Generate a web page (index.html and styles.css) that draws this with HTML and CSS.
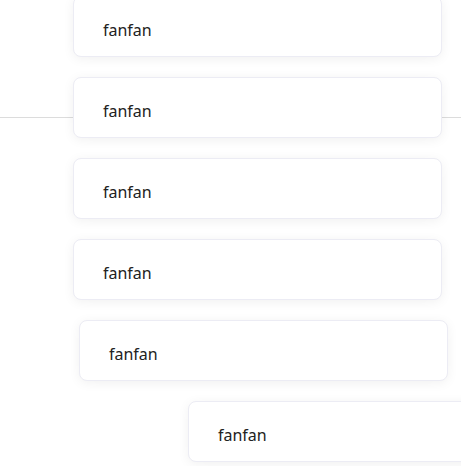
FILE: index.html
```html
<!DOCTYPE html>
<html>
<head>
<meta charset="utf-8">
<link rel="stylesheet" href="styles.css">
</head>
<body>
<div class="stage">
  <div class="divider"></div>
  <ul class="list">
    <li class="card">fanfan</li>
    <li class="card">fanfan</li>
    <li class="card">fanfan</li>
    <li class="card">fanfan</li>
    <li class="card card-nudge">fanfan</li>
    <li class="card card-slide">fanfan</li>
  </ul>
</div>
</body>
</html>
```
FILE: styles.css
```css
html, body {
  margin: 0;
  padding: 0;
  background: #ffffff;
  overflow: hidden;
}
.stage {
  position: relative;
  display: flow-root;
  width: 461px;
  height: 466px;
  overflow: hidden;
}
.divider {
  position: absolute;
  left: 0;
  right: 0;
  top: 117px;
  height: 1px;
  background: #dcdcdc;
}
.list {
  position: relative;
  list-style: none;
  margin: -4px 0 0 0;
  padding: 0 0 0 73px;
  display: flex;
  flex-direction: column;
  gap: 20px;
}
.card {
  box-sizing: border-box;
  width: 369px;
  height: 61px;
  background: #ffffff;
  border: 1px solid #ececf4;
  border-radius: 8px;
  box-shadow: 0 2px 12px rgba(0, 0, 0, 0.06);
  padding: 7px 0 0 29px;
  display: flex;
  align-items: center;
  font-family: "Noto Sans", sans-serif;
  font-size: 16px;
  color: #222222;
}
.card-nudge {
  transform: translateX(6px);
}
.card-slide {
  transform: translateX(115px);
}
```
